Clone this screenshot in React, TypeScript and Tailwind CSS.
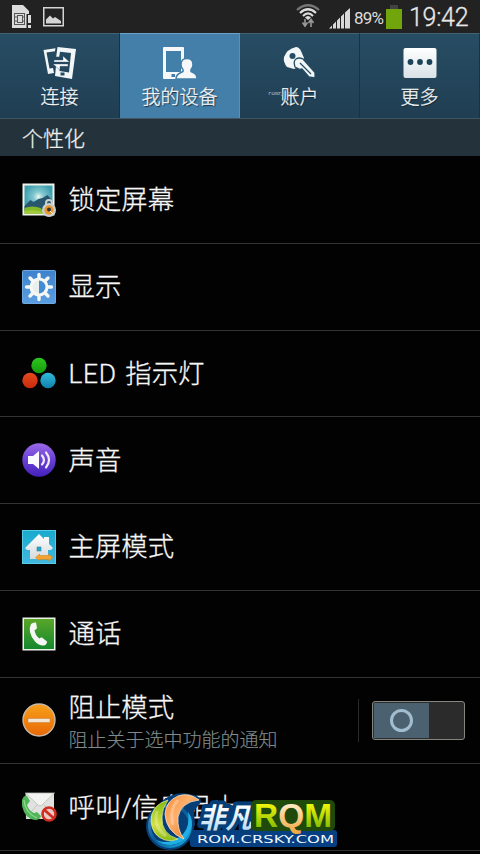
import React from "react";

function SimIcon() {
  return (
    <svg width="22" height="24" viewBox="0 0 22 24">
      <path d="M1 0h11l6 6v17H1z" fill="#dcdcdc" />
      <rect x="3.500" y="8.500" width="10" height="11" fill="#dcdcdc" stroke="#555" />
      <path d="M4 12h2.500M4 16h2.500M11.500 12h2.500M11.500 16h2.500" stroke="#555" fill="none" />
      <rect x="6.500" y="10.500" width="5" height="7" fill="#dcdcdc" stroke="#555" />
      <path d="M15.500 9h6v15h-6z" fill="#222" />
      <path d="M17 10h3v8h-3zM17 20h3v3h-3z" fill="#ddd" />
    </svg>
  );
}

function PictureIcon() {
  return (
    <svg width="21" height="20" viewBox="0 0 21 20">
      <rect x="0.750" y="0.750" width="19.500" height="18" fill="none" stroke="#d4d4d4" strokeWidth="1.500" />
      <path d="M3 16.500v-4l4-4 3 3 2-1.500 3 2 3 2v2.500z" fill="#d4d4d4" />
    </svg>
  );
}

function WifiIcon() {
  return (
    <svg width="24" height="24" viewBox="0 0 24 24" fill="none">
      <path d="M1 6Q12-3.500 23 6" stroke="#777" strokeWidth="2.200" />
      <path d="M4 9Q12 1.500 20 9M7 12Q12 7 17 12" stroke="#ddd" strokeWidth="2.200" />
      <path d="M9 13.500Q12 10.500 15 13.500L12 16z" fill="#ddd" />
      <path d="M9 15v6M6.500 18.500L9 22l2.500-3.500M15 23v-6M12.500 19L15 15.500l2.500 3.500" stroke="#999" strokeWidth="1.600" />
    </svg>
  );
}

function SignalIcon() {
  return (
    <svg width="22" height="21" viewBox="0 0 22 21" fill="#d8d8d8">
      <path d="M0 20.500l3-3v3zM4 20.500v-4l3-3v7zM8 20.500v-8l3-3v11zM12 20.500v-12l3-3v15zM16 20.500v-16L21 0v20.500z" />
    </svg>
  );
}

function ConnectIcon() {
  return (
    <svg width="36" height="34" viewBox="0 0 36 34">
      <path d="M1.500 3l12-1.800-.6 3-8.400 1.300 3 16 3.500-.5 1 5L6 27z" fill="#f3f6f7" />
      <path d="M15.500 0L34 2l-4 30-17-3 1-10h4l-.5 5 9.500 1.500L29 6 18 4.800l-.8 5h-3z" fill="#f3f6f7" />
      <path d="M12 13h9V9l6.500 6H12zM26 17v2.300h-8V23l-7-6z" fill="#fff" stroke="#244d65" strokeWidth=".4" />
      <rect x="18.500" y="25.500" width="4" height="3" fill="#244d65" />
    </svg>
  );
}

function DeviceIcon() {
  return (
    <svg width="36" height="34" viewBox="0 0 36 34">
      <rect x="1" width="21" height="32" rx="1" fill="#f6f8f9" />
      <rect x="4" y="4" width="15" height="21" fill="#427fa9" />
      <rect x="9.500" y="27" width="3.500" height="3" fill="#427fa9" />
      <path d="M14 32q0-4 4-6l3-1.500v-2q-2-2-2-5 0-6 6-6t6 6q0 3-2 5v2l3 1.500q3 1.500 3 6z" fill="#f6f8f9" stroke="#427fa9" strokeWidth="1.500" />
    </svg>
  );
}

function KeyIcon() {
  return (
    <svg width="36" height="34" viewBox="0 0 36 34">
      <path d="M2 10Q5 2 14 0q3 0 5 4l3 7-4 8-6 3-7-2Q1 15 2 10z" fill="#f3f6f7" />
      <circle cx="10.500" cy="9" r="3" fill="#244d65" />
      <path d="M13 20q-2-6 1-8t7 0l12 13.500V31l-6-1-7-8-2 .5z" fill="#f3f6f7" stroke="#244d65" strokeWidth="1.300" strokeLinejoin="round" />
      <path d="M18 16l11 11" stroke="#244d65" strokeWidth="1.300" />
    </svg>
  );
}

function MoreIcon() {
  return (
    <svg width="34" height="32" viewBox="0 0 34 32">
      <defs><linearGradient id="more" x2="0" y2="1"><stop stopColor="#fff" /><stop offset="1" stopColor="#d9e2e6" /></linearGradient></defs>
      <rect x=".5" y="1" width="33" height="30" rx="2" fill="url(#more)" />
      <circle cx="7.500" cy="15" r="2.900" fill="#1d4359" /><circle cx="17" cy="15" r="2.900" fill="#1d4359" /><circle cx="26.500" cy="15" r="2.900" fill="#1d4359" />
    </svg>
  );
}

function LockScreenIcon() {
  return (
    <svg width="34" height="34" viewBox="0 0 34 34" overflow="visible">
      <defs><radialGradient id="sky" cx=".5" cy=".4"><stop stopColor="#edf7ef" /><stop offset=".35" stopColor="#83c8cf" /><stop offset="1" stopColor="#3d9eae" /></radialGradient></defs>
      <rect x=".5" y=".5" width="32" height="32" fill="#f1f2e9" />
      <rect x="2.500" y="2.500" width="28" height="28" fill="url(#sky)" />
      <path d="M2.500 23l6-6 3 2 5-3 4-1 5-3 5 6v9h-28z" fill="#28566c" />
      <path d="M2.500 25q8-3 16 0l5 5.500h-21z" fill="#82b92b" />
      <path d="M2.500 28q9-2 18 1v1.500h-18z" fill="#a4cb35" />
      <path d="M24 23v-3q0-3 3-3t3 3v3" fill="none" stroke="#ccd1d3" strokeWidth="2" />
      <circle cx="27" cy="27" r="7" fill="#c9ced0" /><circle cx="27" cy="27" r="4.700" fill="#e7992e" /><circle cx="27" cy="26.500" r="2" fill="#333" /><path d="M28 28l3 3" stroke="#fff" />
    </svg>
  );
}

function DisplayIcon() {
  return (
    <svg width="34" height="34" viewBox="0 0 34 34">
      <defs><linearGradient id="disp" x2="0" y2="1"><stop stopColor="#3d82cc" /><stop offset="1" stopColor="#5b9ee0" /></linearGradient></defs>
      <rect x=".5" y=".5" width="33" height="33" rx="1" fill="url(#disp)" stroke="#6ca9e2" />
      <path d="M17 4.500v25M4.500 17h25M8 8l18 18M8 26L26 8" stroke="#f5f7f4" strokeWidth="3.400" strokeLinecap="round" />
      <circle cx="17" cy="17" r="9.500" fill="#f5f7f4" />
      <path d="M17 10.500a6.500 6.500 0 0 1 0 13z" fill="#438cd4" />
      <path d="M17 10.500a6.500 6.500 0 0 0 0 13z" fill="#e9efed" />
    </svg>
  );
}

function LedIcon() {
  return (
    <svg width="34" height="34" viewBox="0 0 34 34">
      <defs>
        <linearGradient id="green" x2="0" y2="1"><stop stopColor="#2cc620" /><stop offset="1" stopColor="#159c0a" /></linearGradient>
        <linearGradient id="red" x2="0" y2="1"><stop stopColor="#e6491e" /><stop offset="1" stopColor="#c92b0c" /></linearGradient>
        <linearGradient id="cyan" x2="0" y2="1"><stop stopColor="#32b9db" /><stop offset="1" stopColor="#0f81ac" /></linearGradient>
      </defs>
      <circle cx="17" cy="9.500" r="7.700" fill="url(#green)" /><circle cx="8" cy="24.500" r="7.700" fill="url(#red)" /><circle cx="26" cy="24.500" r="7.700" fill="url(#cyan)" />
    </svg>
  );
}

function SoundIcon() {
  return (
    <svg width="34" height="34" viewBox="0 0 34 34">
      <defs><linearGradient id="snd" x2="0" y2="1"><stop stopColor="#9b69e9" /><stop offset=".5" stopColor="#6840d3" /><stop offset="1" stopColor="#4520bd" /></linearGradient></defs>
      <circle cx="17" cy="17" r="16.700" fill="url(#snd)" />
      <path d="M6 13h5l6-5v18l-6-5H6z" fill="#faf9fc" />
      <path d="M20 12.500q4 4.500 0 9M24 9.500q6 7.500 0 15" stroke="#f0eafb" strokeWidth="2.200" fill="none" strokeLinecap="round" />
    </svg>
  );
}

function HomeIcon() {
  return (
    <svg width="34" height="34" viewBox="0 0 34 34">
      <defs><linearGradient id="hbg" x2="0" y2="1"><stop stopColor="#19aacd" /><stop offset="1" stopColor="#41b8e1" /></linearGradient><linearGradient id="house" x2="0" y2="1"><stop stopColor="#fff" /><stop offset="1" stopColor="#d4dadd" /></linearGradient></defs>
      <rect x=".5" y=".5" width="33" height="33" fill="url(#hbg)" stroke="#55cbe5" />
      <path d="M3 18L17 4l5 5V7h5v7l4 4-2 2h-3v9H8v-9H5z" fill="url(#house)" />
      <rect x="15" y="17" width="4" height="4" fill="#24a5c9" stroke="#3286a0" strokeWidth=".6" />
      <path d="M13.500 27.500l4-3.500v1.500h9V24l4.500 3.500-4.500 3.500v-1.500h-9V31z" fill="#f3a12f" stroke="#c98124" strokeWidth=".5" />
    </svg>
  );
}

function PhoneIcon() {
  return (
    <svg width="34" height="34" viewBox="0 0 34 34">
      <defs><linearGradient id="ph" x2="0" y2="1"><stop stopColor="#5aa629" /><stop offset="1" stopColor="#14882e" /></linearGradient></defs>
      <rect x=".5" y=".5" width="33" height="33" fill="#edf2e7" /><rect x="2" y="2" width="30" height="30" fill="url(#ph)" />
      <path d="M9 7q2-2 5-1.500l1 5.500q-1 2-2.500 2 1 6 5 8.500 1-1.500 2.500-1l5 4q0 3-3 4-5 .5-9-4Q5 15 9 7z" fill="#f5f7f4" />
    </svg>
  );
}

function BlockIcon() {
  return (
    <svg width="34" height="34" viewBox="0 0 34 34">
      <defs><linearGradient id="blk" x2="0" y2="1"><stop stopColor="#f7a11a" /><stop offset="1" stopColor="#e86806" /></linearGradient></defs>
      <circle cx="17" cy="17" r="16" fill="url(#blk)" stroke="#c9b9a8" strokeWidth="1.400" />
      <rect x="6" y="15.500" width="22" height="4" fill="#f3e6d7" stroke="#bd813b" strokeWidth=".5" />
    </svg>
  );
}

function RejectIcon() {
  return (
    <svg width="36" height="34" viewBox="0 0 36 34">
      <path d="M3.500 3H32v26H4z" fill="#e1e2df" />
      <path d="M4 28l11-13M32 27L22 15" stroke="#b8bbb7" strokeWidth=".8" />
      <path d="M3.500 3h29L20 15q-2 2-4 0z" fill="#f3f3ef" stroke="#b8bbb7" strokeWidth=".8" />
      <path d="M0 10q2-5 5-4l3 5-3 4q2 6 7 8l3-1 4 4q-1 4-6 4Q3 29 0 16z" fill="#51b65b" />
      <path d="M2 10q1 13 13 18" stroke="#91d98b" fill="none" strokeWidth="1.300" />
      <circle cx="27" cy="24" r="6.500" fill="#e9c9c4" stroke="#d12c20" strokeWidth="2.600" /><path d="M22.500 20l9 8" stroke="#d12c20" strokeWidth="2.600" />
    </svg>
  );
}

function Tab({ label, icon, active = false }: { label: string; icon: React.ReactNode; active?: boolean }) {
  return (
    <div className={active
      ? "flex h-full flex-col items-center border-r border-t border-r-[#5c91b1] border-t-[#68a3c7] bg-[#437fa9] pt-[13px]"
      : "flex h-full flex-col items-center border-r border-t border-r-[#173446] border-t-[#416174] bg-linear-to-b from-[#274d64] to-[#203e52] pt-[13px]"}>
      <div className="flex h-[34px] items-start justify-center">{icon}</div>
      <div className="mt-[3px] whitespace-nowrap text-[19px] leading-[28px] text-[#f1f4f5] [text-shadow:1px_1px_1px_#152735]">{label}</div>
    </div>
  );
}

function Row({ label, icon }: { label: React.ReactNode; icon: React.ReactNode }) {
  return (
    <div className="flex h-[86.750px] shrink-0 items-center border-b border-[#333] pl-[22px]">
      <div className="flex w-[46.500px] shrink-0">{icon}</div>
      <div className="whitespace-nowrap pt-[1px] text-[26.400px] leading-[36px]">{label}</div>
    </div>
  );
}

function Watermark() {
  return (
    <svg className="absolute left-[143px] top-[792px]" width="197" height="62" viewBox="0 0 197 62">
      <defs>
        <linearGradient id="lime" x2="0" y2="1"><stop stopColor="#80ba0a" /><stop offset=".6" stopColor="#d3e043" /><stop offset="1" stopColor="#88ba15" /></linearGradient>
        <linearGradient id="orange" x2="1" y2="1"><stop stopColor="#f58a35" /><stop offset=".4" stopColor="#ffb06c" /><stop offset="1" stopColor="#dc6b14" /></linearGradient>
        <linearGradient id="blue" x2="1" y2="1"><stop stopColor="#4c8fc4" /><stop offset=".5" stopColor="#0a5c9b" /><stop offset="1" stopColor="#18b0e2" /></linearGradient>
        <linearGradient id="rom" x2="0" y2="1"><stop offset=".2" stopColor="#f0f50a" /><stop offset="1" stopColor="#68ae00" /></linearGradient>
        <linearGradient id="tail" x2="0" y2="1"><stop offset=".2" stopColor="#ffe9c4" /><stop offset="1" stopColor="#f0a63e" /></linearGradient>
        <linearGradient id="ice" x2="0" y2="1"><stop offset=".3" stopColor="#fff" /><stop offset="1" stopColor="#a9d3ee" /></linearGradient>
      </defs>
      <path d="M49 41h142v11H50z" fill="#073f83" stroke="#073f83" strokeWidth="6" strokeLinejoin="round" />
      <circle cx="27" cy="34" r="24" fill="#063f78" />
      <path d="M18 10Q30-1 46 2q12 1 12 8l-7 9 1 14-9 18-20-6z" fill="#063f78" />
      <circle cx="27" cy="34" r="20.500" fill="none" stroke="url(#blue)" strokeWidth="3" />
      <path d="M45 20q8 11 0 23-6 9-17 10-9 0-15-5 9 4 18 0 12-5 14-16 1-7 0-12z" fill="#20aee4" />
      <path d="M25 8Q8 13 8 29q1 15 14 19 7 2 13-1Q18 42 19 25q0-9 6-17z" fill="url(#lime)" stroke="#e5f1a0" strokeWidth=".7" />
      <path d="M56 8Q46 0 35 4 23 9 22 22q1 18 19 25Q34 38 35 25q3-15 21-17z" fill="url(#orange)" stroke="#ffdfb9" strokeWidth=".8" />
      <path d="M14 19q-4 16 9 25M35 8q-9 9-5 25" stroke="#ffffff" strokeOpacity=".28" strokeWidth="3" fill="none" />
      <text x="56" y="36" textLength="53" lengthAdjust="spacingAndGlyphs" fontFamily="Noto Sans CJK SC, sans-serif" fontSize="28" fontWeight="700" fontStyle="italic" fill="url(#ice)" stroke="#063f78" strokeWidth="8" strokeLinejoin="round" paintOrder="stroke">非凡</text>
      <rect x="108" y="8" width="84" height="31" rx="5" fill="#1f4a0b" />
      <text x="111" y="35" textLength="78" lengthAdjust="spacingAndGlyphs" fontFamily="Liberation Sans, sans-serif" fontSize="33" fontWeight="700" fill="url(#rom)">R<tspan fill="url(#tail)">Q</tspan>M</text>
      <text x="54" y="51" textLength="137" lengthAdjust="spacingAndGlyphs" fontFamily="DejaVu Sans, sans-serif" fontSize="11" fontWeight="400" fill="#edf7fc" strokeWidth="0" className="[-webkit-text-stroke:0px]">ROM.CRSKY.COM</text>
    </svg>
  );
}

export default function App() {
  return (
    <main className="relative flex h-[854px] w-[480px] flex-col overflow-hidden bg-[#020202] font-['Roboto','Noto_Sans_CJK_SC',sans-serif] font-light text-[#f7f7f7] [-webkit-text-stroke:0.3px_currentColor]">
      <header className="flex h-[33px] shrink-0 items-start bg-[#222] [-webkit-text-stroke:0px]">
        <div className="flex pl-[11px] pt-[5px]"><SimIcon /><div className="ml-[10px] mt-[2px]"><PictureIcon /></div></div>
        <div className="ml-auto flex pr-[12px]">
          <div className="mt-[4px]"><WifiIcon /></div>
          <div className="ml-[9px] mt-[8px]"><SignalIcon /></div>
          <div className="ml-[3px] w-[30px] whitespace-nowrap text-[17px] font-normal leading-[37px] tracking-[-.8px] text-[#ddd]">89%</div>
          <div className="ml-[2px] mt-[5px] flex w-[16px] flex-col items-center"><div className="h-[4px] w-[8px] bg-[#424242]" /><div className="h-[20px] w-[16px] bg-[#70a50b]" /></div>
          <div className="ml-[7px] w-[59px] whitespace-nowrap text-[25px] font-light leading-[35px] tracking-[-.3px] text-[#e8e8e8] [-webkit-text-stroke:0.3px_currentColor]">19:42</div>
        </div>
      </header>
      <nav className="grid h-[86px] shrink-0 grid-cols-4 border-b border-[#405562]">
        <Tab label="连接" icon={<ConnectIcon />} />
        <Tab label="我的设备" icon={<DeviceIcon />} active />
        <div className="relative"><Tab label="账户" icon={<KeyIcon />} /><span className="absolute left-[28px] top-[56px] font-['Liberation_Mono',monospace] text-[6px] tracking-[-.4px] text-[#aabbc2] [-webkit-text-stroke:0px]">romzj.com</span></div>
        <Tab label="更多" icon={<MoreIcon />} />
      </nav>
      <div className="h-[37px] shrink-0 bg-[#23323b] pl-[22px] text-[21px] leading-[40px] text-[#eef0ed]">个性化</div>
      <section className="flex flex-col pt-[1px]">
        <Row label="锁定屏幕" icon={<LockScreenIcon />} />
        <Row label="显示" icon={<DisplayIcon />} />
        <Row label={<><span className="mr-[2px] tracking-[.7px]">LED</span> 指示灯</>} icon={<LedIcon />} />
        <Row label="声音" icon={<SoundIcon />} />
        <Row label="主屏模式" icon={<HomeIcon />} />
        <Row label="通话" icon={<PhoneIcon />} />
        <div className="flex h-[86.750px] shrink-0 items-center border-b border-[#333] pl-[22px] pr-[15px]">
          <div className="w-[46.500px] shrink-0"><BlockIcon /></div>
          <div className="flex-1 whitespace-nowrap pt-[7px]"><div className="text-[26.400px] leading-[34px]">阻止模式</div><div className="text-[19px] leading-[31px] text-[#7f8b8c] [-webkit-text-stroke:0.150px_currentColor]">阻止关于选中功能的通知</div></div>
          <div className="mr-[13px] h-[43px] w-px bg-[#2a2a2a]" />
          <div className="flex h-[39px] w-[93px] rounded-[3px] border border-[#85857f] bg-[#2b2b2b] p-[1px]"><div className="flex w-[55px] items-center justify-center bg-[#4c6170]"><div className="size-[23px] rounded-full border-[3px] border-[#a2bdcf]" /></div></div>
        </div>
        <Row label="呼叫/信息阻止" icon={<RejectIcon />} />
      </section>
      <Watermark />
    </main>
  );
}
